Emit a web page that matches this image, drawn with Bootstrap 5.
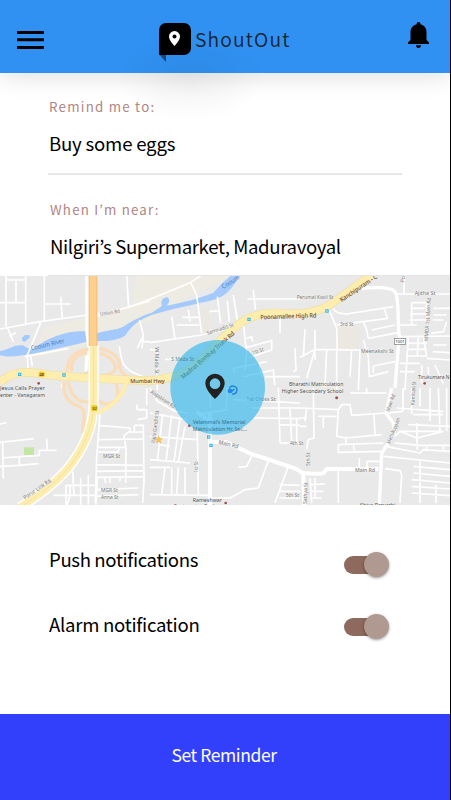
<!DOCTYPE html>
<html lang="en">
<head>
<meta charset="utf-8">
<meta name="viewport" content="width=device-width, initial-scale=1">
<title>ShoutOut</title>
<link href="https://cdn.jsdelivr.net/npm/bootstrap@5.3.0/dist/css/bootstrap.min.css" rel="stylesheet">
<style>
body{font-family:"Noto Sans CJK JP","Noto Sans",sans-serif;background:#fff;color:#000;overflow:hidden}
.app{width:451px;height:800px;border-right:1px solid #000}
.topbar{height:73px;background:#3091f2;box-shadow:0 2px 26px rgba(0,0,0,.14);padding:0 20px 0 17px}
.glow{left:115px;top:30px;width:150px;height:94px;background:radial-gradient(closest-side,rgba(0,0,0,.05),rgba(0,0,0,0));pointer-events:none}
.menu{margin-top:30px}
.brand{margin-top:23px;left:159px}
.brand-name{font-size:19.3px;line-height:33px;letter-spacing:1.15px;color:#17242f;margin-left:4px;font-weight:350}
.bell{margin-top:21px}
.form-area{padding:24px 48px 0 48px}
.field-label{font-size:13.3px;line-height:20px;color:#b08582;letter-spacing:1.25px;padding-left:1px}
.field-text{font-size:18.6px;line-height:24px;margin-top:14px;padding:0 0 18px 1px;white-space:nowrap;letter-spacing:-.2px}
.field-line{border-bottom:2px solid #e8e8e8}
.near{margin-top:25px}
.near .field-label,.near .field-text{padding-left:2px}
.near .field-label{letter-spacing:1.2px}
.near .field-text{margin-top:14px;padding-bottom:17px;border-bottom:1px solid #e4e4e4;margin-right:-48px;letter-spacing:-.36px}
.map{height:229px}
.map text{font-family:"Noto Sans",Roboto,sans-serif}
.settings{padding:42px 61px 0 49px;height:209px}
.setting{height:65px;font-size:18.6px;line-height:24px;letter-spacing:-.37px;font-variant-ligatures:common-ligatures}
.toggle{width:45px;height:25px;margin-top:5px}
.second .toggle{margin-top:2px}
.second{letter-spacing:-.27px}
.track{width:40px;height:18px;border-radius:9px;background:#8d695e}
.knob{width:25px;height:25px;background:#b09990;margin-left:-20px;box-shadow:0 1px 3px rgba(0,0,0,.4)}
.cta{height:86px;background:#3340fb;color:#fff;font-size:17.5px;letter-spacing:-.42px;padding:0 2px 4px 0}
.cta:hover{background:#3340fb;color:#fff}
</style>
</head>
<body>
<div class="app d-flex flex-column position-relative">
<header class="topbar d-flex align-items-start justify-content-between flex-shrink-0 position-relative">
  <svg class="menu" width="28" height="20" viewBox="0 0 28 20"><path d="M0 2.500h27M0 9.700h27M0 17.500h27" stroke="#000" stroke-width="3"/></svg>
  <div class="brand d-flex align-items-start position-absolute">
    <svg width="32" height="40" viewBox="0 0 32 40"><path d="M0 31h7v8z" fill="#184979"/><path d="M7 0h18a7 7 0 0 1 7 7v18a7 7 0 0 1-7 7H0V7a7 7 0 0 1 7-7z"/><path d="M15.500 8a5.500 5.500 0 0 0-5.500 5.600c0 4 5.500 9.400 5.500 9.400s5.500-5.400 5.500-9.400A5.500 5.500 0 0 0 15.500 8z" fill="#fff"/><circle cx="15.500" cy="13.500" r="2"/></svg>
    <span class="brand-name">ShoutOut</span>
  </div>
  <svg class="bell" width="23" height="28" viewBox="0 0 23 28"><path d="M11.500 1c1.300 0 2 .9 2 2.300 4 1 6 4.200 6 8.200v7.500l2.500 2.500V23H1v-1.500L3.500 19v-7.500c0-4 2-7.200 6.200-8.200C9.700 1.900 10.200 1 11.500 1zM9 24.200h5c0 1.700-1 2.800-2.500 2.800S9 25.900 9 24.200z"/></svg>
</header>
<div class="glow position-absolute"></div>

<section class="form-area">
  <div class="field-line">
    <div class="field-label">Remind me to:</div>
    <div class="field-text">Buy some eggs</div>
  </div>
  <div class="near">
    <div class="field-label">When I’m near:</div>
    <div class="field-text">Nilgiri’s Supermarket, Maduravoyal</div>
  </div>
</section>

<svg class="map d-block flex-shrink-0" width="450" height="229" viewBox="0 18 1350 687" preserveAspectRatio="none">
  <rect y="18" width="1350" height="687" fill="#e9e9e9"/>
  <!-- land patches -->
  <path d="M130 175L290 135 400 100 405 15H700L560 85 450 150 370 185 300 210 210 240 100 265z" fill="#eeebe2"/>
  <path d="M605 112h22v70l-25 15zM1015 165h60v75h-62z" fill="#ece7e0"/>
  <path d="M72 532h30v24H72z" fill="#c5e5a3"/>
  <!-- river -->
  <path d="M0 243C25 240 45 222 68 226L95 240C150 195 210 180 262 184V215C200 230 150 240 95 252 60 255 40 265 0 256z
   M66 203L75 195 90 196 88 204 74 215 66 212zM291 190C330 178 350 180 370 170 400 150 430 135 455 128L486 108C480 92 490 82 502 82 512 90 507 100 500 107 560 95 600 85 640 68L668 38 695 15H722C700 45 690 70 650 87 580 105 520 115 455 135 420 150 400 160 375 197 350 212 320 214 291 213z" fill="#a3c9fd"/>
  <!-- local streets -->
  <g fill="none" stroke="#fff" stroke-width="5" stroke-linejoin="round">
    <path d="M18 15V170M48 30V98M77 15V160M0 98H77M18 30H77M133 15V150M133 102H212M182 80L187 148M0 177L120 155 262 135 300 130M122 158L82 255 84 298M92 258L97 288M22 172L40 215M28 198L48 188M75 260L205 235M380 15L386 115M291 138L450 93M418 150L430 195 426 235M412 235L430 195M426 215H450M358 228C365 280 370 290 395 305L430 320M186 340V354" />
    <g transform="translate(450)"><path d="M-60 110L0 88 120 38 155 15M122 38L140 75 155 190M65 140L75 207M97 142H148M115 120L120 155M80 165H148M202 80L212 160M232 92L238 155M250 75L262 150M178 125L205 122M0 218L155 195 240 175M292 87H450M310 58L316 120M390 140V188M280 160L290 250 285 300M290 205L305 200 308 215M290 232L365 212V240L300 262M255 310L250 295 350 275M280 320L370 300 374 345M328 282L335 320M345 320H450M435 235L438 300 430 305M0 238L22 242V360M45 268H130"/></g>
    <g transform="translate(900)"><path d="M100 115C105 130 120 130 140 132L280 110M88 120L110 175 112 240M110 165L265 145M190 155L200 180 205 205 295 188M215 180L285 165M252 115L262 145M290 72H450M312 15V72M295 165H350M335 98H380M332 115H380M330 132H380M328 150H380M335 98V163M380 98V163M400 115H450M400 135H440M398 150H430M392 190L430 185 440 155M300 200L450 198M320 220H380M322 238H380M318 258H380M325 200L315 360M355 200L352 258M370 200L380 260M380 265L450 270M400 225H440M398 245L450 248M15 178L10 260M45 180V270M0 262L45 238 180 240M180 240L175 360M110 240V360M80 240L75 350M155 240L150 320M45 238L20 325M190 210L205 260 208 320 265 305M220 288V310M220 288L285 275M300 280H360M300 305H345M365 285V340M385 290V330M405 285L430 340"/></g>
    <g transform="translate(0 354)"><path d="M0 108L20 104M0 163L102 152M8 165L10 272M8 210L58 206 118 202 118 187H170M140 152L142 187M0 235L58 232 115 227M58 206V232M300 75L290 210 286 345M300 113L390 120V130L372 142 378 180 377 285M295 155L430 153M293 178H378M290 192L355 192 357 178M290 230L430 232M290 250L430 248M290 268L430 266M312 266L318 285M330 266V285M360 266V280M403 112H430L432 280 428 345M403 112V130M385 132H430M210 292V322L200 355M218 250L222 322M242 270V350M265 262V350M292 265L288 350M198 292H285M160 322H286M198 292V350M286 305L415 300M286 325L415 320M410 50L412 65H440L440 90 412 95M440 0V50"/></g>
    <g transform="translate(450 354)"><path d="M0 0L22 40 75 70 115 75M0 75L110 95M38 78L22 220M65 82L48 220M90 90L72 220M105 115L85 220M0 145L140 155M0 215L120 225M30 170L60 175M0 238H60M45 240L35 320M65 238V320M85 238L80 320M105 238V320M0 320L175 322M142 130L145 320M180 0L182 60M145 80L230 65V0M305 60H450M310 90L450 92M250 35L450 45M385 0L390 165M390 60H450M390 110L450 112M390 165H450M420 60L425 160M440 90V165M305 205L290 235 265 238M355 218L325 300 285 305 240 330H175M415 235L375 345M388 290L450 292M388 310H450M388 330H450"/></g>
    <g transform="translate(900 354)"><path d="M40 0L42 150 25 155 20 185M0 60L115 65M20 60L15 100M0 90H20M0 115H20M55 85H110M70 85V120M115 65L125 50H150L155 82 262 75M115 65L110 145 138 150 245 140M115 170L250 165M115 170V195M160 172L165 195M112 193L245 190M138 145V165M222 80L225 140M150 15H260M200 0V18M178 210V240M200 220L202 240M200 220H240M310 0L308 70 265 75M335 0V78M360 0V55M390 0V100M415 0L420 130M440 0V130M290 60L430 70M340 80H430M285 145L300 130 350 150 430 130M300 130H430M325 110L450 115M350 105L352 185M285 165L360 172H450M258 175L360 195 370 185 450 190M250 205L450 225M255 242L300 248 305 260 300 345M360 220V345M340 235L450 245M340 255L450 265M335 275L450 285M335 295L450 303M335 315L450 323M408 290V345M430 170V190M380 170V190M115 245V345M30 270L35 345M30 290L75 288M30 310H70M30 330H65M45 270V330"/></g>
  </g>
  <!-- wider streets -->
  <g fill="none" stroke="#fff" stroke-width="10" stroke-linejoin="round">
    <path d="M261 15V190L267 230M262 240L258 300 265 320M1040 60C1110 50 1170 50 1185 65 1200 90 1190 140 1198 200L1190 290 1185 354M1175 354L1158 430 1180 460 1182 490 1145 550 1138 705"/>
    <path d="M630 430L630 705M630 515L680 517 750 550 890 597 905 608C940 612 965 612 972 608L980 597H1135M910 610L912 705M590 425L630 455" stroke-width="12"/>
  </g>
  <!-- interchange ramps -->
  <g fill="none" stroke="#f9dcba" stroke-width="10">
    <path d="M268 238C225 240 205 265 203 290 202 305 190 320 175 330M215 305C210 270 235 248 262 250M295 235C335 240 360 265 358 285 358 305 375 315 390 325M300 250C325 255 350 275 345 300 330 320 310 315 292 318M192 335C188 375 205 400 240 410 255 420 255 440 247 490M205 335C210 370 230 402 270 395M385 335C365 370 350 400 320 402 300 402 295 390 290 380M205 330C235 320 255 315 275 300M350 335L355 395"/>
  </g>
  <!-- highways -->
  <g fill="none" stroke-linejoin="round">
    <path d="M0 338C40 300 80 305 130 312 220 325 350 328 450 332 560 325 610 270 660 212 720 155 750 130 820 129 900 135 930 130 970 115 1010 95 1050 60 1115 15" stroke="#f0dfa0" stroke-width="26"/>
    <path d="M0 338C40 300 80 305 130 312 220 325 350 328 450 332 560 325 610 270 660 212 720 155 750 130 820 129 900 135 930 130 970 115 1010 95 1050 60 1115 15" stroke="#fdedaf" stroke-width="22"/>
    <path d="M281 225V400C280 470 250 540 200 600 150 655 100 685 60 712" stroke="#fff" stroke-width="31"/>
    <path d="M281 225V400C280 470 250 540 200 600 150 655 100 685 60 712" stroke="#fdedaf" stroke-width="22"/>
    <path d="M382 332C370 370 350 405 290 430" stroke="#fdedaf" stroke-width="12"/>
    <path d="M281 225V400C280 470 250 540 200 600 150 655 100 685 60 712" stroke="#ead696" stroke-width="1.500"/>
    <path d="M279 15V228" stroke="#f2be71" stroke-width="26"/><path d="M279 15V228" stroke="#fdd08f" stroke-width="20"/>
  </g>
  <!-- road shields and stops -->
  <rect x="116" y="305" width="18" height="15" rx="3" fill="#f1cb20"/><rect x="274" y="406" width="19" height="17" rx="3" fill="#f1cb20"/>
  <g fill="#37b6ee"><path d="M54 308h10v10H54zM187 310h10v10h-10zM742 143h10v10h-10zM976 118h10v10h-10zM621 496h10v10h-10zM628 521h10v10h-10z"/></g>
  <g fill="#bfe8fb"><path d="M57 311h4v4h-4zM190 313h4v4h-4zM745 146h4v4h-4zM979 121h4v4h-4zM624 499h4v4h-4zM631 524h4v4h-4z"/></g>
  <rect x="1183" y="206" width="34" height="17" fill="#fff" stroke="#777" stroke-width="2"/>
  <path d="M476 498l3 7 8 1-6 5 2 8-7-4-7 4 2-8-6-5 8-1z" fill="#f8c850" stroke="#d99a30"/>
  <g fill="#9b5349"><circle cx="116" cy="340" r="4"/><circle cx="1274" cy="340" r="4"/><circle cx="1010" cy="383" r="4.500"/><circle cx="677" cy="699" r="4"/><circle cx="568" cy="467" r="4"/></g>
  <!-- street names -->
  <g font-size="16" fill="#777" stroke="#f5f5f5" stroke-width="2" paint-order="stroke">
    <text x="301" y="138" textLength="60" lengthAdjust="spacingAndGlyphs" transform="rotate(-9 301 138)">Union Rd</text>
    <text x="574" y="195" textLength="84" lengthAdjust="spacingAndGlyphs" transform="translate(48) rotate(-18 574 195)">Samnadis St</text>
    <text x="758" y="254" textLength="36" lengthAdjust="spacingAndGlyphs" transform="rotate(-18 758 254)">1st St</text>
    <text x="466" y="232" textLength="80" lengthAdjust="spacingAndGlyphs" transform="rotate(90 466 232)">W Mada St</text>
    <text x="890" y="87" textLength="110" lengthAdjust="spacingAndGlyphs">Perumal Kovil St</text>
    <text x="1244" y="74" textLength="62" lengthAdjust="spacingAndGlyphs">Ajitha St</text>
    <text x="1284" y="213" textLength="130" lengthAdjust="spacingAndGlyphs" transform="rotate(-86 1284 213)">MMDA 1st Main Rd</text>
    <text x="1212" y="38" transform="rotate(-80 1212 38)">Po</text>
    <text x="1020" y="167" textLength="40" lengthAdjust="spacingAndGlyphs">3rd St</text>
    <text x="1083" y="249" textLength="98" lengthAdjust="spacingAndGlyphs">Meenakshi St</text>
    <text x="1247" y="365" font-size="14" textLength="30" lengthAdjust="spacingAndGlyphs" transform="rotate(-90 1247 365)">1st St</text>
    <text x="309" y="564" textLength="51" lengthAdjust="spacingAndGlyphs">MGR St</text><text x="303" y="667" textLength="50" lengthAdjust="spacingAndGlyphs">MGR St</text><text x="303" y="687" textLength="52" lengthAdjust="spacingAndGlyphs">Anna St</text>
    <text x="75" y="689" textLength="96" lengthAdjust="spacingAndGlyphs" font-size="17" transform="rotate(-34 75 689)">Porur Link Rd</text>
    <text x="450" y="368" textLength="86" lengthAdjust="spacingAndGlyphs" transform="rotate(34 450 368)">Alapakkam Rd</text>
    <text x="465" y="520" textLength="98" lengthAdjust="spacingAndGlyphs" transform="rotate(-83 465 520)">Rajiv Gandhi St</text>
    <text x="595" y="608" textLength="34" lengthAdjust="spacingAndGlyphs" font-size="14" transform="rotate(-90 595 608)">1st St</text>
    <text x="739" y="392" textLength="88" lengthAdjust="spacingAndGlyphs">1st Cross St</text>
    <text x="655" y="522" textLength="60" lengthAdjust="spacingAndGlyphs" font-size="18" transform="rotate(13 655 522)">Main Rd</text>
    <text x="870" y="524" textLength="40" lengthAdjust="spacingAndGlyphs">4th St</text><text x="857" y="681" textLength="40" lengthAdjust="spacingAndGlyphs">5th St</text>
    <text x="930" y="588" textLength="40" lengthAdjust="spacingAndGlyphs" transform="rotate(-90 930 588)">5th St</text>
    <text x="920" y="702" textLength="65" lengthAdjust="spacingAndGlyphs" transform="rotate(-87 920 702)">Sathya St</text>
    <text x="1065" y="605" textLength="60" lengthAdjust="spacingAndGlyphs">Main Rd</text>
    <text x="1168" y="426" textLength="54" lengthAdjust="spacingAndGlyphs" transform="rotate(-70 1168 426)">Main Rd</text>
    <text x="1170" y="522" textLength="82" lengthAdjust="spacingAndGlyphs" transform="rotate(-68 1170 522)">Mettukuppam</text>
    <text x="1243" y="406" textLength="55" lengthAdjust="spacingAndGlyphs" transform="rotate(-87 1243 406)">Kambar</text>
  </g>
  <g font-size="16" fill="#494949" stroke="#f5f5f5" stroke-width="2" paint-order="stroke">
    <text x="0" y="361" textLength="135" lengthAdjust="spacingAndGlyphs">Jesus Calls Prayer</text><text x="0" y="382" textLength="135" lengthAdjust="spacingAndGlyphs">enter - Vanagaram</text>
    <text x="867" y="349" textLength="163" lengthAdjust="spacingAndGlyphs">Bharathi Matriculation</text><text x="845" y="370" textLength="185" lengthAdjust="spacingAndGlyphs">Higher Secondary School</text>
    <text x="1254" y="327" textLength="94" lengthAdjust="spacingAndGlyphs">Tirukumara N</text>
    <text x="578" y="695" textLength="88" lengthAdjust="spacingAndGlyphs">Rameshwar</text><text x="522" y="715" textLength="145" lengthAdjust="spacingAndGlyphs">Engineering Enclave</text>
    <text x="1080" y="711" textLength="106" lengthAdjust="spacingAndGlyphs">Shiva Parvathi</text>
  </g>
  <g fill="#744f35" stroke="#744f35" stroke-width=".4" font-size="18">
    <text x="391" y="338" textLength="103" lengthAdjust="spacingAndGlyphs">Mumbai Hwy</text>
    <text x="781" y="145" textLength="168" lengthAdjust="spacingAndGlyphs" transform="rotate(-2 865 140)">Poonamallee High Rd</text>
    <text x="1025" y="96" textLength="130" lengthAdjust="spacingAndGlyphs" transform="rotate(-34 1025 96)">Kanchipuram - C</text>
    <text x="550" y="327" textLength="205" lengthAdjust="spacingAndGlyphs" transform="rotate(-41 550 327)">Madras Bombay Trunk Rd</text>
  </g>
  <g fill="#4c7fb4" font-size="19"><text x="94" y="241" textLength="103" lengthAdjust="spacingAndGlyphs" transform="rotate(-13 94 241)">Cooum River</text><text x="670" y="57" textLength="58" lengthAdjust="spacingAndGlyphs" transform="rotate(-32 670 57)">Cooum</text></g>
  <text x="118" y="317" font-size="12" fill="#222">48</text><text x="277" y="419" font-size="12" fill="#222">32</text><text x="1186" y="220" font-size="13" fill="#333" textLength="28">1001</text>
  <!-- selected radius and pin -->
  <circle cx="653" cy="352" r="142" fill="#28b5ec" fill-opacity=".62"/>
  <text x="514" y="272" font-size="16" fill="#4c7e95" textLength="68" lengthAdjust="spacingAndGlyphs">S Mada St</text>
  <g fill="#356f91" font-size="16"><text x="578" y="463" textLength="158" lengthAdjust="spacingAndGlyphs">Velammal’s Memorial</text><text x="578" y="484" textLength="163" lengthAdjust="spacingAndGlyphs">Matriculation Hr. Sec...</text></g>
  <path d="M688 355a12 12 0 1 1 8 17M693 366l10-9" fill="none" stroke="#1c82cf" stroke-width="4"/><circle cx="690" cy="363" r="7" fill="#2685ea"/>
  <path d="M645 311a29 29 0 0 0-29 29c0 22 29 47 29 47s29-25 29-47a29 29 0 0 0-29-29zm0 14a16 16 0 1 1 0 32 16 16 0 0 1 0-32z" fill="#222" fill-rule="evenodd"/>
</svg>

<section class="settings flex-shrink-0">
  <div class="setting d-flex justify-content-between align-items-start">
    <span>Push notifications</span>
    <span class="toggle d-flex align-items-center"><span class="track"></span><span class="knob rounded-circle"></span></span>
  </div>
  <div class="setting second d-flex justify-content-between align-items-start">
    <span>Alarm notification</span>
    <span class="toggle d-flex align-items-center"><span class="track"></span><span class="knob rounded-circle"></span></span>
  </div>
</section>
<button class="cta btn rounded-0 border-0 w-100 flex-shrink-0" type="button">Set Reminder</button>
</div>
<script src="https://cdn.jsdelivr.net/npm/bootstrap@5.3.0/dist/js/bootstrap.bundle.min.js"></script>
</body>
</html>
